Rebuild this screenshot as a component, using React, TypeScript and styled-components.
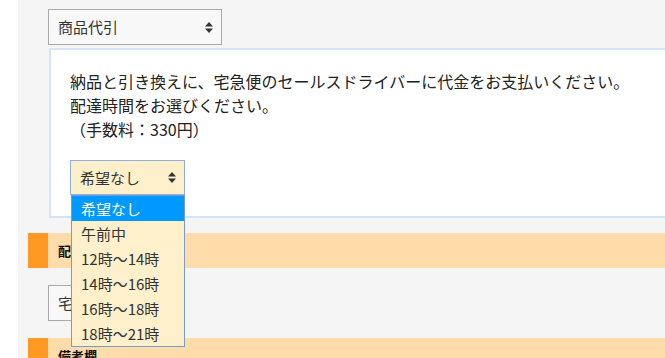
import styled, { createGlobalStyle } from 'styled-components'

const GlobalStyle = createGlobalStyle`
  body {
    margin: 0;
    background: #fff;
    overflow: hidden;
    font-family: "Noto Sans CJK JP", "Noto Sans", sans-serif;
    color: #222;
  }
`

const timeOptions = ['希望なし', '午前中', '12時～14時', '14時～16時', '16時～18時', '18時～21時']

const Arrows = () => (
  <svg width="8" height="11" viewBox="0 0 8 11">
    <path d="M4 0 L8 4.5 L0 4.5 Z" fill="#333" />
    <path d="M4 11 L8 6.5 L0 6.5 Z" fill="#333" />
  </svg>
)

export default function App() {
  return (
    <>
      <GlobalStyle />
      <Page>
        <Gutter />
        <Main>
          <Indent>
            <SelectBox width="174px">
              <span>商品代引</span>
              <Arrows />
            </SelectBox>
            <InfoBox>
              <Message>
                納品と引き換えに、宅急便のセールスドライバーに代金をお支払いください。
                <br />
                配達時間をお選びください。
                <br />
                （手数料：330円）
              </Message>
              <DropWrap>
                <SelectBox width="115px" height="35px" open>
                  <span>希望なし</span>
                  <Arrows />
                </SelectBox>
                <OptionList>
                  {timeOptions.map((opt, i) => (
                    <OptionItem key={opt} active={i === 0}>
                      {opt}
                    </OptionItem>
                  ))}
                </OptionList>
              </DropWrap>
            </InfoBox>
          </Indent>
          <SectionHeader top="15px">配送方法</SectionHeader>
          <Indent>
            <SelectBox width="120px" top="17px">
              <span>宅配便</span>
              <Arrows />
            </SelectBox>
          </Indent>
          <SectionHeader top="17px">備考欄</SectionHeader>
        </Main>
      </Page>
    </>
  )
}

const Page = styled.div`
  display: flex;
  width: 720px;
  height: 358px;
`

const Gutter = styled.div`
  width: 18px;
  flex-shrink: 0;
  background: #fff;
`

const Main = styled.div`
  flex: 1;
  background: #f5f5f5;
  padding: 9px 0 0 10px;
`

const Indent = styled.div`
  padding-left: 20px;
`

const SelectBox = styled.div<{ width: string; height?: string; open?: boolean; top?: string }>`
  box-sizing: border-box;
  display: flex;
  align-items: center;
  justify-content: space-between;
  width: ${(p) => p.width};
  height: ${(p) => p.height || '36px'};
  margin-top: ${(p) => p.top || '0'};
  padding: 0 8px 0 9px;
  font-size: 15px;
  line-height: 20px;
  color: #333;
  background: ${(p) => (p.open ? '#fff0cc' : '#f8f8f8')};
  border: 1px solid ${(p) => (p.open ? '#8db0dc' : '#aaa')};
  svg {
    flex-shrink: 0;
  }
`

const InfoBox = styled.div`
  margin: 3px 0 0 1px;
  width: 700px;
  background: #fff;
  border: 2px solid #d6e4fa;
  padding: 19px 19px 21px 19px;
`

const Message = styled.p`
  margin: 0;
  font-size: 16px;
  line-height: 24px;
  color: #222;
`

const DropWrap = styled.div`
  position: relative;
  margin-top: 19px;
  width: 115px;
`

const OptionList = styled.div`
  position: absolute;
  top: 100%;
  left: 1px;
  width: 114px;
  box-sizing: border-box;
  background: #fff0cc;
  border: 1px solid #7a9ccc;
  z-index: 5;
`

const OptionItem = styled.div<{ active?: boolean }>`
  height: 25px;
  line-height: 25px;
  padding-left: 9px;
  font-size: 15px;
  color: ${(p) => (p.active ? '#fff' : '#333')};
  background: ${(p) => (p.active ? '#0099ff' : 'transparent')};
`

const SectionHeader = styled.div<{ top: string }>`
  margin-top: ${(p) => p.top};
  height: 35px;
  display: flex;
  align-items: center;
  padding-left: 30px;
  background: linear-gradient(to right, #ff9922 0 20px, #ffdcaa 20px);
  font-size: 13px;
  font-weight: bold;
  color: #111;
`
